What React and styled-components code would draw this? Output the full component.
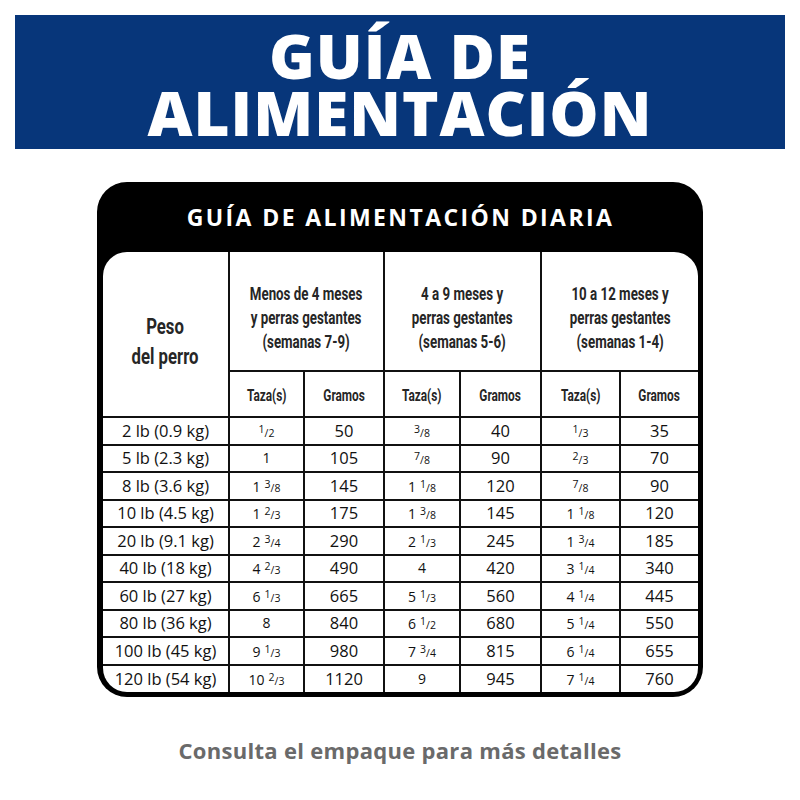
import React from 'react';
import styled, { createGlobalStyle } from 'styled-components';

const GlobalStyle = createGlobalStyle`
  html, body {
    margin: 0;
    padding: 0;
    background: #fff;
  }
  body {
    width: 800px;
    height: 800px;
    overflow: hidden;
    font-family: 'Open Sans', sans-serif;
  }
`;

const Page = styled.div`
  width: 800px;
  height: 800px;
  padding-top: 15px;
  box-sizing: border-box;
  display: flex;
  flex-direction: column;
  align-items: center;
`;

const Banner = styled.header`
  width: 770px;
  height: 134px;
  box-sizing: border-box;
  padding-top: 12px;
  background: #07367a;
  text-align: center;
`;

const Title = styled.h1`
  margin: 0;
  color: #fff;
  font-family: 'Open Sans', sans-serif;
  font-weight: 800;
  font-size: 62px;
  line-height: 57px;
  letter-spacing: 1px;
`;

const Card = styled.section`
  margin-top: 33px;
  width: 606px;
  box-sizing: border-box;
  padding: 0 5px 5px 6px;
  background: #000;
  border-radius: 30px;
`;

const CardTitle = styled.h2`
  height: 70px;
  margin: 0;
  display: flex;
  align-items: center;
  justify-content: center;
  color: #fff;
  font-family: 'Open Sans', sans-serif;
  font-weight: 700;
  font-size: 23px;
  letter-spacing: 2.4px;
`;

const Inner = styled.div`
  background: #fff;
  border-radius: 24px;
  overflow: hidden;
`;

const Table = styled.table`
  width: 100%;
  table-layout: fixed;
  border-collapse: collapse;
  border: 2px hidden;

  th, td {
    border: 2px solid #111;
    padding: 0;
    text-align: center;
  }
`;

const HeadCell = styled.th`
  font-family: Roboto, 'Liberation Sans', sans-serif;
  font-weight: 700;
  color: #262626;
  font-size: ${p => (p.$big ? '22px' : p.$small ? '16px' : '18px')};
  line-height: ${p => (p.$big ? '30px' : '24px')};
  white-space: nowrap;

  && {
    padding-top: ${p => p.$push || 0}px;
  }
`;

// the print uses a condensed face; squeeze Roboto to match
const Narrow = styled.span`
  display: inline-block;
  transform: scaleX(${p => p.$scale || 0.74});
`;

const GroupRow = styled.tr`
  height: 119px;
`;

const SubRow = styled.tr`
  height: 46px;
`;

const DataRow = styled.tr`
  height: 27.5px;
`;

const Cell = styled.td`
  font-family: 'Open Sans', sans-serif;
  color: #111;
  font-size: ${p => (p.$cups ? '14px' : '16.5px')};
  line-height: 20px;
`;

const Num = styled.span`
  font-size: 10.5px;
  vertical-align: 4px;
  margin-left: ${p => (p.$after ? '4px' : '0')};
`;

const Den = styled.span`
  font-size: 10.5px;
`;

const Footer = styled.p`
  margin: 38px 0 0;
  color: #6a6a6a;
  font-family: 'Open Sans', sans-serif;
  font-weight: 700;
  font-size: 22px;
  letter-spacing: 0.3px;
`;

const groups = [
  ['Menos de 4 meses', 'y perras gestantes', '(semanas 7-9)'],
  ['4 a 9 meses y', 'perras gestantes', '(semanas 5-6)'],
  ['10 a 12 meses y', 'perras gestantes', '(semanas 1-4)'],
];

const rows = [
  ['2 lb (0.9 kg)', '1/2', '50', '3/8', '40', '1/3', '35'],
  ['5 lb (2.3 kg)', '1', '105', '7/8', '90', '2/3', '70'],
  ['8 lb (3.6 kg)', '1 3/8', '145', '1 1/8', '120', '7/8', '90'],
  ['10 lb (4.5 kg)', '1 2/3', '175', '1 3/8', '145', '1 1/8', '120'],
  ['20 lb (9.1 kg)', '2 3/4', '290', '2 1/3', '245', '1 3/4', '185'],
  ['40 lb (18 kg)', '4 2/3', '490', '4', '420', '3 1/4', '340'],
  ['60 lb (27 kg)', '6 1/3', '665', '5 1/3', '560', '4 1/4', '445'],
  ['80 lb (36 kg)', '8', '840', '6 1/2', '680', '5 1/4', '550'],
  ['100 lb (45 kg)', '9 1/3', '980', '7 3/4', '815', '6 1/4', '655'],
  ['120 lb (54 kg)', '10 2/3', '1120', '9', '945', '7 1/4', '760'],
];

const widths = [126, 75, 80, 76, 81, 79, 78];

// "1 3/8" -> whole number + small fraction
const Cups = ({ value }) => {
  const parts = value.split(' ');
  const frac = parts.find(p => p.includes('/'));
  const whole = parts.find(p => !p.includes('/'));
  if (!frac) return <>{whole}</>;
  const [n, d] = frac.split('/');
  return (
    <>
      {whole}
      <Num $after={!!whole}>{n}</Num>
      <Den>/{d}</Den>
    </>
  );
};

const App = () => (
  <>
    <GlobalStyle />
    <Page>
      <Banner>
        <Title>
          GUÍA DE
          <br />
          ALIMENTACIÓN
        </Title>
      </Banner>

      <Card>
        <CardTitle>GUÍA DE ALIMENTACIÓN DIARIA</CardTitle>
        <Inner>
          <Table>
            <colgroup>
              {widths.map((w, i) => (
                <col key={i} style={{ width: w }} />
              ))}
            </colgroup>
            <thead>
              <GroupRow>
                <HeadCell $big $push={16} rowSpan={2}>
                  <Narrow $scale={0.76}>
                    Peso
                    <br />
                    del perro
                  </Narrow>
                </HeadCell>
                {groups.map((g, i) => (
                  <HeadCell key={i} $push={13} colSpan={2}>
                    <Narrow>
                      {g[0]}
                      <br />
                      {g[1]}
                      <br />
                      {g[2]}
                    </Narrow>
                  </HeadCell>
                ))}
              </GroupRow>
              <SubRow>
                {groups.map((g, i) => (
                  <React.Fragment key={i}>
                    <HeadCell $small $push={3}><Narrow>Taza(s)</Narrow></HeadCell>
                    <HeadCell $small $push={3}><Narrow>Gramos</Narrow></HeadCell>
                  </React.Fragment>
                ))}
              </SubRow>
            </thead>
            <tbody>
              {rows.map(r => (
                <DataRow key={r[0]}>
                  <Cell>{r[0]}</Cell>
                  <Cell $cups><Cups value={r[1]} /></Cell>
                  <Cell>{r[2]}</Cell>
                  <Cell $cups><Cups value={r[3]} /></Cell>
                  <Cell>{r[4]}</Cell>
                  <Cell $cups><Cups value={r[5]} /></Cell>
                  <Cell>{r[6]}</Cell>
                </DataRow>
              ))}
            </tbody>
          </Table>
        </Inner>
      </Card>

      <Footer>Consulta el empaque para más detalles</Footer>
    </Page>
  </>
);

export default App;
